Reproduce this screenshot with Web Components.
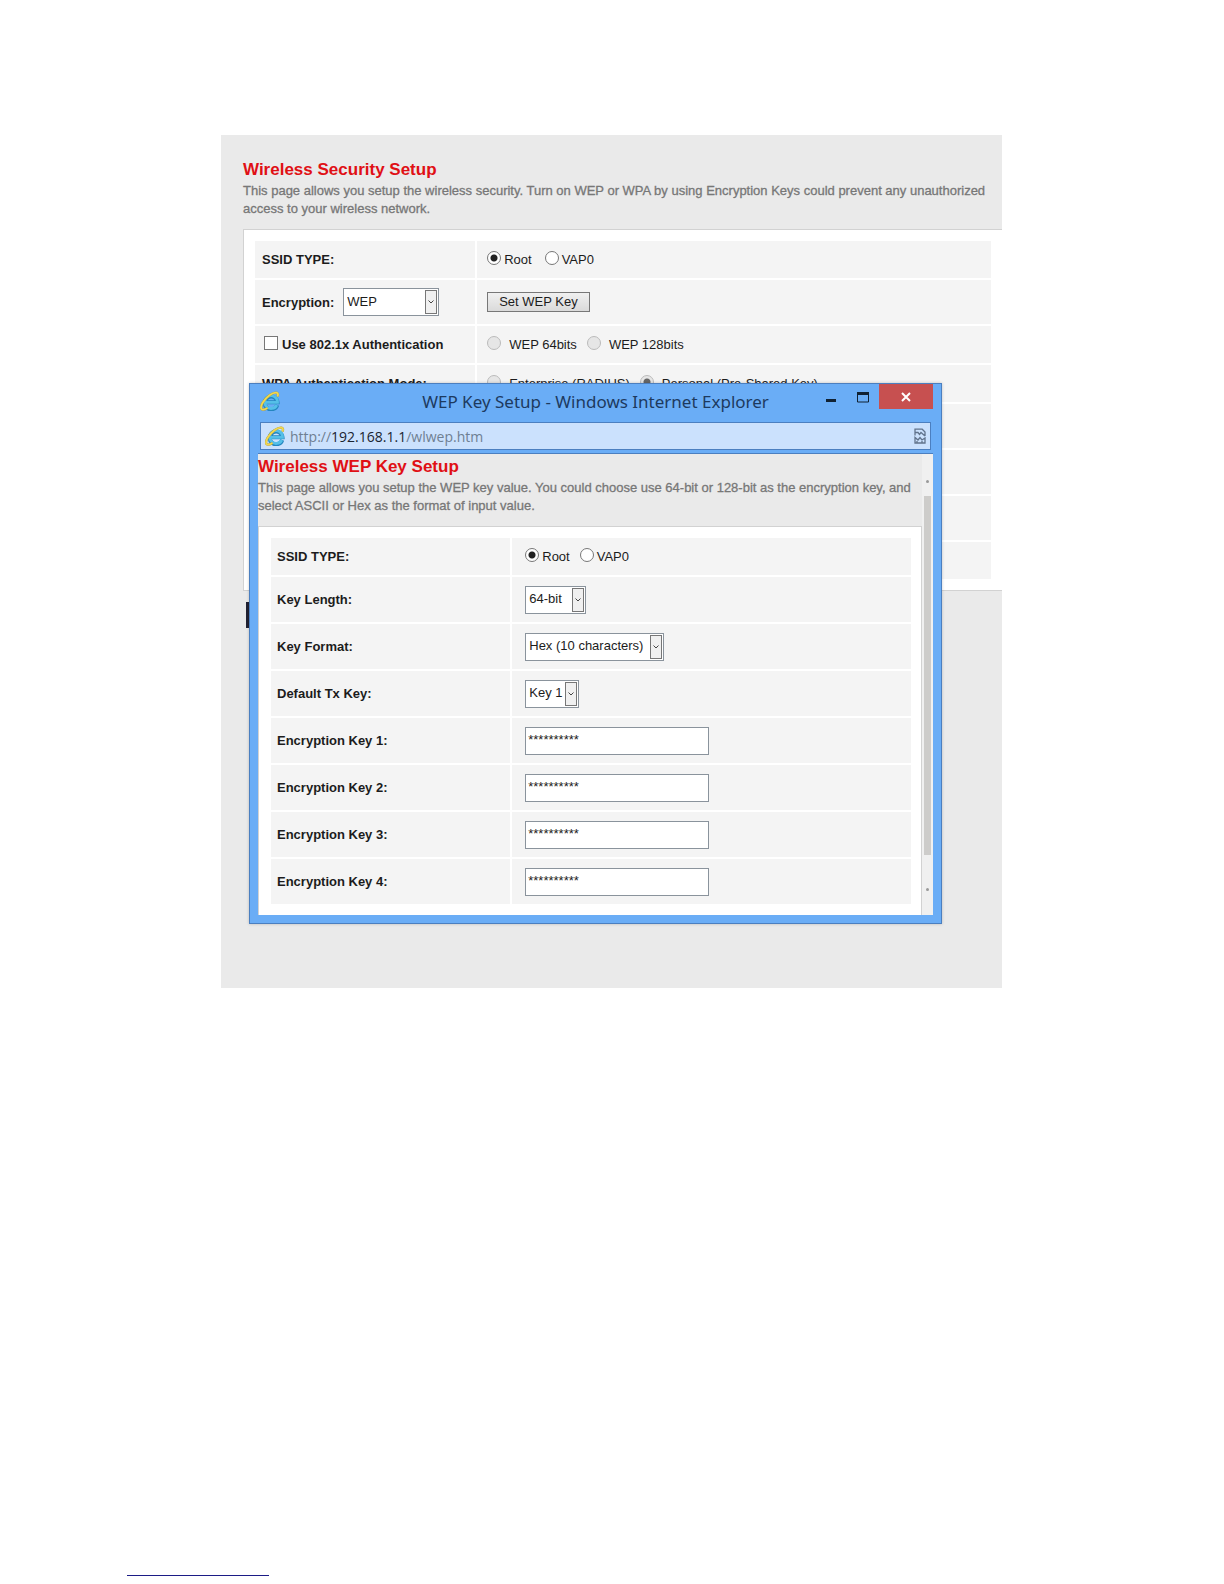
<!DOCTYPE html>
<html lang="en">
<head>
<meta charset="utf-8">
<title>Wireless Security Setup</title>
<style>
    body{
        margin: 0;
        background: #fff;
        font-family: "Liberation Sans", Arial, sans-serif;
        font-size: 13px;
    }

    /* only the host part of the address is dark */
    browser-window b{
        font-weight: normal;
        color: #1a2430;
    }
</style>
</head>
<body>
<router-page>
    <setup-intro>
        <span slot="title">Wireless Security Setup</span>
        This page allows you setup the wireless security. Turn on WEP or WPA by using Encryption Keys could prevent any unauthorized access to your wireless network.
    </setup-intro>
    <security-form></security-form>
    <browser-window slot="popup">
        <span slot="title">WEP Key Setup - Windows Internet Explorer</span>
        <span slot="address">http://<b>192.168.1.1</b>/wlwep.htm</span>
        <setup-intro>
            <span slot="title">Wireless WEP Key Setup</span>
            This page allows you setup the WEP key value. You could choose use 64-bit or 128-bit as the encryption key, and select ASCII or Hex as the format of input value.
        </setup-intro>
        <wep-key-form></wep-key-form>
    </browser-window>
</router-page>

<script>
class RouterPage extends HTMLElement{

    constructor(){
        super();
        this.attachShadow({ mode : "open"});
    }

    static get styles(){
        return `
            :host{
                display: flex;
                flex-direction: column;
                min-height: 100vh;
                box-sizing: border-box;
                padding: 135px 222px 8px 221px;
            }

            main{
                position: relative;
                background: #eaeaea;
                padding: 24px 0 360px 22px;
            }

            /* floats over the page like a desktop window */
            .popup{
                position: absolute;
                top: 248px;
                left: 28px;
                right: 60px;
            }

            .apply{
                display: block;
                width: 100px;
                height: 26px;
                margin: 11px 0 0 3px;
                background: #ddd;
                border: 3px solid #223;
            }

            footer{
                margin: auto 0 0 -94px;
            }

            hr{
                width: 142px;
                margin: 0;
                border: 0;
                border-top: 1px solid #1c1c86;
            }
        `
    }

    connectedCallback(){
        this.render();
    }

    render(){
        this.shadowRoot.innerHTML = `
        <style>${RouterPage.styles}</style>
        <main>
            <slot></slot>
            <button class="apply" type="button"></button>
            <div class="popup"><slot name="popup"></slot></div>
        </main>
        <footer><hr></footer>
        `
    }
}

class SetupIntro extends HTMLElement{

    constructor(){
        super();
        this.attachShadow({ mode : "open"});
    }

    static get styles(){
        return `
            :host{
                display: block;
                padding-bottom: 11px;
            }

            h1{
                margin: 0 0 2px;
                font-size: 17px;
                line-height: 21px;
                color: #e01015;
            }

            p{
                margin: 0 8px 0 0;
                font-size: 13px;
                line-height: 18px;
                color: #777;
                -webkit-text-stroke: 0.3px #777;
            }
        `
    }

    connectedCallback(){
        this.render();
    }

    render(){
        this.shadowRoot.innerHTML = `
        <style>${SetupIntro.styles}</style>
        <h1><slot name="title"></slot></h1>
        <p><slot></slot></p>
        `
    }
}

/* table and controls shared by both forms */
class SetupForm extends HTMLElement{

    constructor(){
        super();
        this.attachShadow({ mode : "open"});
    }

    static get styles(){
        return `
            :host{
                display: block;
                background: #fff;
                border: 1px solid #d2d2d2;
                border-right: 0;
                padding: 9px;
                color: #1c1c1c;
            }

            table{
                width: 100%;
                border-collapse: separate;
                border-spacing: 2px;
                table-layout: fixed;
            }

            th, td{
                height: 44px;
                padding: 0 10px;
                background: #f4f4f4;
                text-align: left;
                vertical-align: middle;
            }

            th{
                padding: 0 7px;
            }

            .short > *{
                height: 37px;
            }

            .line{
                display: flex;
                align-items: center;
            }

            .options{
                display: flex;
                gap: 13px;
            }

            .options label{
                display: flex;
                align-items: center;
                gap: 3px;
            }

            .options.wide{
                gap: 10px;
            }

            .options.wide label{
                gap: 8px;
            }

            input, select, button{
                font: inherit;
                color: inherit;
                margin: 0;
                box-sizing: border-box;
            }

            [type=radio], [type=checkbox]{
                appearance: none;
                width: 14px;
                height: 14px;
                margin-bottom: 4px;
                background: #fff;
                border: 1px solid #777;
            }

            [type=radio]{
                border-radius: 50%;
            }

            [type=radio]:checked{
                background: radial-gradient(circle, #222 0 3px, #fff 4px);
            }

            [type=radio]:disabled{
                background: #e6e6e6;
                border-color: #bbb;
            }

            [type=radio]:disabled:checked{
                background: radial-gradient(circle, #666 0 3px, #e6e6e6 4px);
            }

            [type=text]{
                display: block;
                width: 184px;
                height: 28px;
                padding: 0 2px 2px;
                background: #fff;
                border: 1px solid #8a939c;
            }

            .select{
                display: inline-grid;
                align-items: center;
                width: var(--width);
                font-weight: normal;
            }

            .select > *{
                grid-area: 1 / 1;
            }

            select{
                appearance: none;
                width: 100%;
                height: 28px;
                padding: 0 3px 2px;
                background: #fff;
                border: 1px solid #8a939c;
                border-radius: 0;
            }

            .select svg{
                justify-self: end;
                margin-right: 2px;
                pointer-events: none;
            }

            button{
                height: 20px;
                padding: 0 11px;
                background: linear-gradient(#f0f0f0, #dadada);
                border: 1px solid #777;
                line-height: 16px;
            }
        `
    }

    select(id, value, width){
        return `
        <span class="select" style="--width: ${width}px">
            <select id="${id}"><option>${value}</option></select>
            <svg width="12" height="24" viewBox="0 0 12 24">
                <rect x=".5" y=".5" width="11" height="23" fill="#f0f0f0" stroke="#777"/>
                <path d="M3.500 10.500 6 13l2.500-2.500" fill="none" stroke="#444"/>
            </svg>
        </span>`
    }

    connectedCallback(){
        this.render();
    }
}

class SecurityForm extends SetupForm{

    render(){
        this.shadowRoot.innerHTML = `
        <style>
            ${SetupForm.styles}
            .label{ width: 30%; }
        </style>
        <table>
            <colgroup><col class="label"><col></colgroup>
            <tr class="short">
                <th>SSID TYPE:</th>
                <td><div class="options">
                    <label><input type="radio" name="ssid" checked>Root</label>
                    <label><input type="radio" name="ssid">VAP0</label>
                </div></td>
            </tr>
            <tr>
                <th><div class="line" style="gap: 9px">
                    <label for="encryption">Encryption:</label>
                    ${this.select("encryption", "WEP", 96)}
                </div></th>
                <td><button type="button">Set WEP Key</button></td>
            </tr>
            <tr class="short">
                <th><div class="line" style="gap: 4px; padding-left: 2px">
                    <input type="checkbox" id="dot1x">
                    <label for="dot1x">Use 802.1x Authentication</label>
                </div></th>
                <td><div class="options wide">
                    <label><input type="radio" name="bits" disabled>WEP 64bits</label>
                    <label><input type="radio" name="bits" disabled>WEP 128bits</label>
                </div></td>
            </tr>
            <tr class="short">
                <th>WPA Authentication Mode:</th>
                <td><div class="options wide">
                    <label><input type="radio" name="mode" disabled>Enterprise (RADIUS)</label>
                    <label><input type="radio" name="mode" disabled checked>Personal (Pre-Shared Key)</label>
                </div></td>
            </tr>
            <tr><th></th><td></td></tr>
            <tr><th></th><td></td></tr>
            <tr><th></th><td></td></tr>
            <tr class="short"><th></th><td></td></tr>
        </table>
        `
    }
}

class WepKeyForm extends SetupForm{

    render(){
        const keys = [1, 2, 3, 4].map(n => `
            <tr>
                <th><label for="key${n}">Encryption Key ${n}:</label></th>
                <td><input type="text" id="key${n}" value="**********"></td>
            </tr>`).join("");

        this.shadowRoot.innerHTML = `
        <style>
            ${SetupForm.styles}
            :host{
                border-bottom: 0;
                border-right: 1px solid #d2d2d2;
                padding: 9px 8px 9px 10px;
            }
            .label{ width: 37.5%; }
            .options{ gap: 10px; }
            th{ padding: 0 6px; }
            td{ padding: 0 13px; }
            th, td{ height: 45px; }
        </style>
        <table>
            <colgroup><col class="label"><col></colgroup>
            <tr class="short">
                <th>SSID TYPE:</th>
                <td><div class="options">
                    <label><input type="radio" name="ssid" checked>Root</label>
                    <label><input type="radio" name="ssid">VAP0</label>
                </div></td>
            </tr>
            <tr>
                <th><label for="length">Key Length:</label></th>
                <td>${this.select("length", "64-bit", 61)}</td>
            </tr>
            <tr>
                <th><label for="format">Key Format:</label></th>
                <td>${this.select("format", "Hex (10 characters)", 139)}</td>
            </tr>
            <tr>
                <th><label for="txkey">Default Tx Key:</label></th>
                <td>${this.select("txkey", "Key 1", 54)}</td>
            </tr>
            ${keys}
        </table>
        `
    }
}

class BrowserIcon extends HTMLElement{

    constructor(){
        super();
        this.attachShadow({ mode : "open"});
    }

    connectedCallback(){
        this.render();
    }

    render(){
        this.shadowRoot.innerHTML = `
        <style>
            :host{ display: block; width: 20px; height: 20px; }
            svg{ display: block; }
        </style>
        <svg width="20" height="20" viewBox="0 0 20 20" fill="none">
            <path d="M17.200 14A6.400 6.400 0 1 1 17.500 11.300H6" stroke="#2386bf" stroke-width="4"/>
            <path d="M16.800 14A6.400 6.400 0 1 1 17.500 11.300H6" stroke="#55bfe8" stroke-width="2.800"/>
            <path d="M17.500 5.500C19.500 .8 15 .4 9.500 4.200 3.500 8.600-.2 15.500 1.500 18c1 1.200 3.500.5 6-1" stroke="#b09a3c" stroke-width="2.400"/>
            <path d="M17.500 5.500C19.500 .8 15 .4 9.500 4.200 3.500 8.600-.2 15.500 1.500 18c1 1.200 3.500.5 6-1" stroke="#f0d850" stroke-width="1.800"/>
        </svg>
        `
    }
}

class BrowserWindow extends HTMLElement{

    constructor(){
        super();
        this.attachShadow({ mode : "open"});
    }

    static get styles(){
        return `
            :host{
                display: block;
                background: #6aadf6;
                border: 1px solid #4b7fc0;
                padding: 0 8px 8px;
                box-shadow: 0 0 3px #0003;
            }

            .titlebar{
                display: grid;
                grid-template-columns: 1fr auto 1fr;
                height: 38px;
                font-family: "Noto Sans", "Open Sans", sans-serif;
                font-size: 17px;
                line-height: 36px;
                color: #1d3a5f;
            }

            .titlebar browser-icon{
                margin: 7px 0 0 2px;
            }

            .buttons{
                display: flex;
                justify-content: flex-end;
                align-items: flex-start;
            }

            button{
                display: grid;
                place-items: center;
                width: 32px;
                height: 25px;
                padding: 0;
                border: 0;
                background: none;
            }

            .close{
                width: 54px;
                background: #c75050;
            }

            .address{
                display: flex;
                align-items: center;
                gap: 5px;
                height: 26px;
                margin: 0 2px 3px;
                padding: 0 4px;
                background: #cbe1fd;
                border: 1px solid #4b7fc0;
                font-family: "Open Sans", "Noto Sans", sans-serif;
                font-size: 14px;
                color: #6f7f92;
            }

            .address ::slotted(span){
                flex: 1;
            }

            .view{
                display: grid;
                grid-template-columns: 1fr 11px;
                background: #eaeaea;
                border-top: 1px solid #4b7fc0;
            }

            .content{
                padding-top: 2px;
            }

            .scrollbar{
                display: flex;
                flex-direction: column;
                align-items: center;
                background: #f0f0f0;
            }

            .scrollbar i{
                width: 3px;
                height: 3px;
                margin: 26px 0 13px;
                border-radius: 50%;
                background: #999;
            }

            .scrollbar i:last-child{
                margin: 33px 0 24px;
            }

            .thumb{
                flex: 1;
                width: 7px;
                background: #cdccca;
            }
        `
    }

    connectedCallback(){
        this.render();
    }

    render(){
        this.shadowRoot.innerHTML = `
        <style>${BrowserWindow.styles}</style>
        <div class="titlebar">
            <browser-icon></browser-icon>
            <slot name="title"></slot>
            <div class="buttons">
                <button type="button" aria-label="Minimize">
                    <svg width="12" height="12"><path d="M1 9.500h10" stroke="#123" stroke-width="3"/></svg>
                </button>
                <button type="button" aria-label="Maximize">
                    <svg width="12" height="12"><path d="M.5 1v10h11V1" fill="none" stroke="#123"/><path d="M0 2.500h12" stroke="#123" stroke-width="3"/></svg>
                </button>
                <button class="close" type="button" aria-label="Close">
                    <svg width="10" height="10"><path d="m1 1 8 8M9 1 1 9" stroke="#fff" stroke-width="2"/></svg>
                </button>
            </div>
        </div>
        <div class="address">
            <browser-icon></browser-icon>
            <slot name="address"></slot>
            <svg width="12" height="16" fill="none" stroke="#61738c" stroke-width="1.300">
                <path d="M1 7.500V1.200h7.200L11 4v4M1 4.500h3l1.500 2 1.500-2 4 3.500M1 15V9.500l3 2.500 2-2.500 2 2.500 3-2v5ZM3 14.500v-1.500M8 14.500v-1.500"/>
            </svg>
        </div>
        <div class="view">
            <div class="content"><slot></slot></div>
            <div class="scrollbar"><i></i><div class="thumb"></div><i></i></div>
        </div>
        `
    }
}

customElements.define("router-page", RouterPage)
customElements.define("setup-intro", SetupIntro)
customElements.define("security-form", SecurityForm)
customElements.define("wep-key-form", WepKeyForm)
customElements.define("browser-icon", BrowserIcon)
customElements.define("browser-window", BrowserWindow)
</script>
</body>
</html>
